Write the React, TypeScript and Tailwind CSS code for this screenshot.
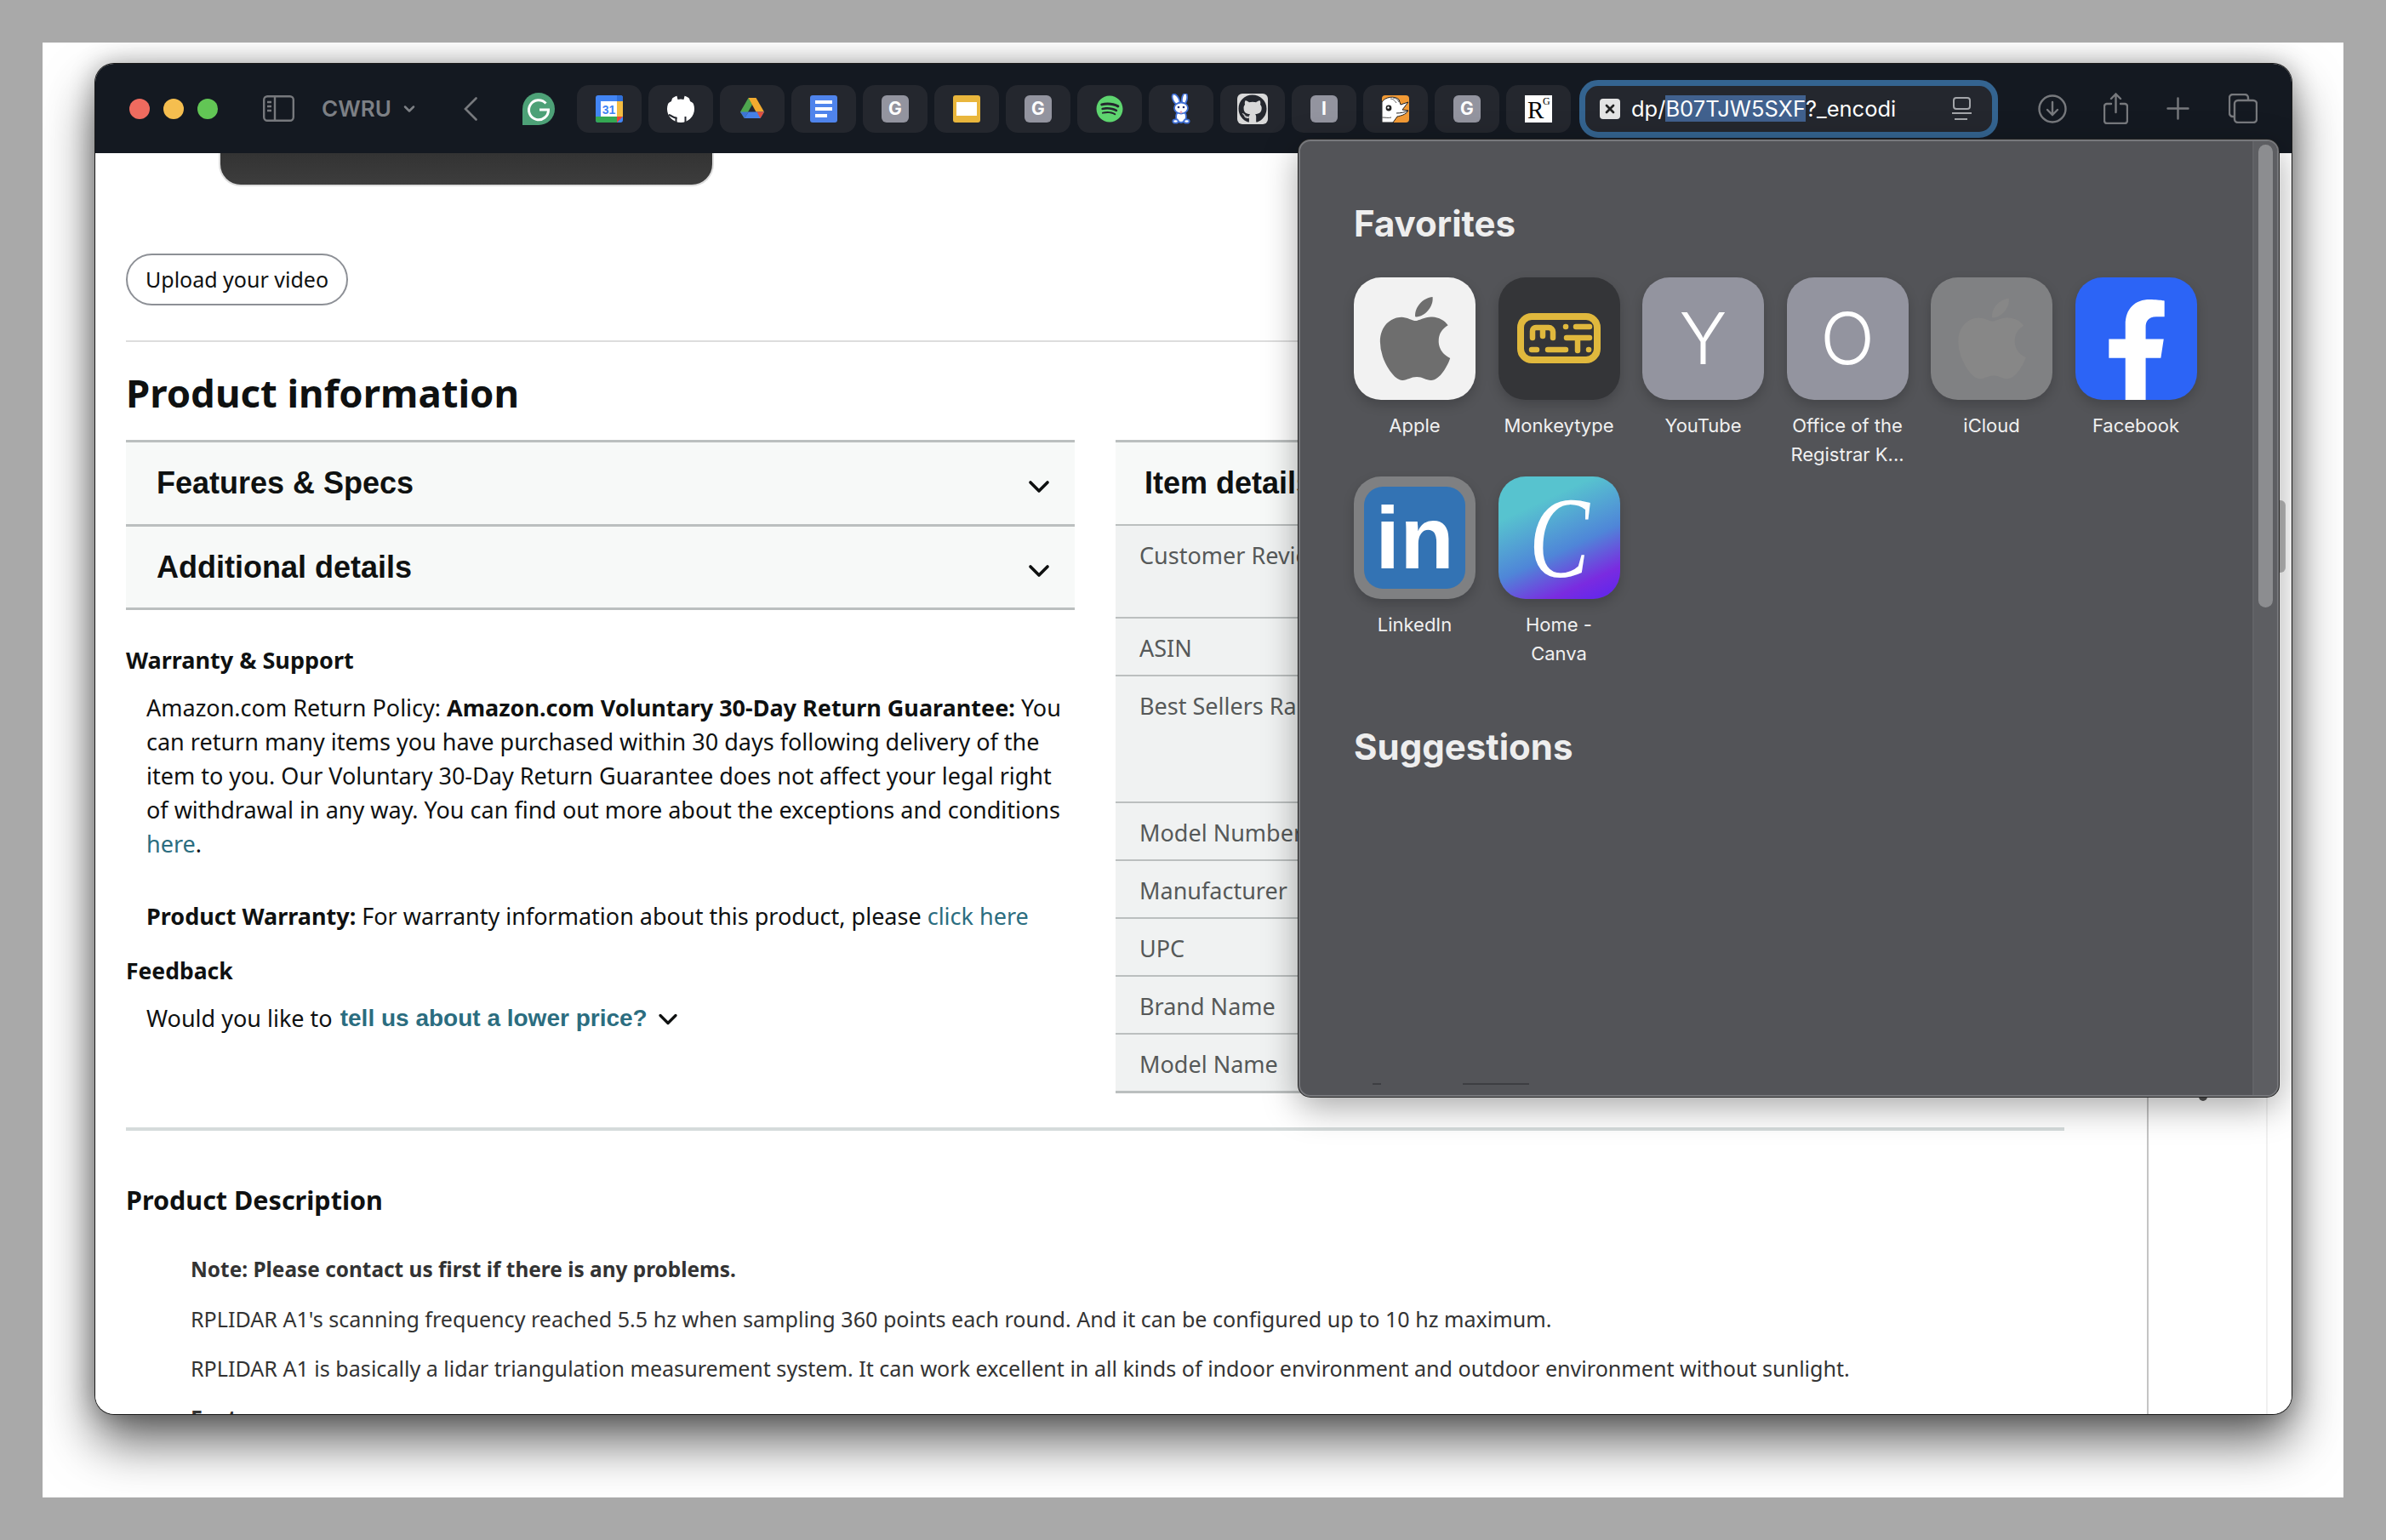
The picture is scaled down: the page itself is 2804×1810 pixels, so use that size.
import React from 'react';
import { ChevronDown, X } from 'lucide-react';
import { FaApple, FaFacebookF, FaGithub, FaSpotify } from 'react-icons/fa';

const Chip = ({ children }: { children: React.ReactNode }) => (
  <div className="flex h-[56px] w-[76px] shrink-0 items-center justify-center rounded-[14px] bg-[#24272e]">
    {children}
  </div>
);

const LetterFavicon = ({ letter }: { letter: string }) => (
  <div className="flex h-[32px] w-[32px] items-center justify-center rounded-[6px] bg-[#93949f] font-[Inter,sans-serif] text-[21px] font-bold text-white">
    {letter}
  </div>
);

const CalendarFavicon = () => (
  <svg viewBox="0 0 32 32" className="h-[32px] w-[32px]">
    <rect width="32" height="32" rx="3" fill="#4285f4" />
    <rect x="24" y="7" width="8" height="18" fill="#f4bc41" />
    <path d="M0 25h25v7H3a3 3 0 0 1-3-3z" fill="#34a853" />
    <path d="M25 25h7l-7 7z" fill="#ea4335" />
    <path d="M25 0h4a3 3 0 0 1 3 3v4h-7z" fill="#2f6fd8" />
    <rect x="6" y="7" width="19" height="18" fill="#fff" />
    <text x="15.5" y="22" textAnchor="middle" fontSize="14" fontWeight="700" fill="#4285f4" className="font-['Liberation_Sans',sans-serif]">31</text>
  </svg>
);

const DriveFavicon = () => (
  <svg viewBox="0 0 32 32" className="h-[32px] w-[32px]">
    <path d="M11.5 3 16 11 6.8 27 2 19.5z" fill="#4ea64f" />
    <path d="M11.5 3H20l-4 8z" fill="#2f8a4a" />
    <path d="M11.5 3H20.5L30 19.5H20.5z" fill="#f2ab2f" />
    <path d="M11.5 19.5H30L25.5 27H6.8z" fill="#4480e8" />
    <path d="M24.5 19.5H30L25.5 27 21.5 19.5z" fill="#e2503d" />
    <path d="M11.5 19.5H2L6.8 27z" fill="#3d74d4" />
  </svg>
);

// solid white octocat, the favicon has no cut-out for the cat
const WhiteOctocat = () => (
  <svg viewBox="0 0 32 32" className="h-[32px] w-[32px]">
    <circle cx="16" cy="16" r="16" fill="#fff" />
    <path d="M11 -1h10l-1.5 6q-3.5-1-7 0z" fill="#24272e" />
    <path d="M0 0h7L5 7 0 10zM32 0h-7l2 7 5 3z" fill="#24272e" />
    <path d="M2 23c3.5.5 4.5 4 9.5 3.5" fill="none" stroke="#24272e" strokeWidth="2.2" />
    <path d="M10.5 33v-7M21.5 33v-8" stroke="#24272e" strokeWidth="2" />
  </svg>
);

const DocsFavicon = () => (
  <div className="flex h-[32px] w-[32px] flex-col items-center justify-center gap-[4px] rounded-[3px] bg-[#4f84ec]">
    <div className="h-[4px] w-[20px] bg-white" />
    <div className="h-[4px] w-[20px] bg-white" />
    <div className="mr-[6px] h-[4px] w-[14px] bg-white" />
  </div>
);

const SlidesFavicon = () => (
  <div className="flex h-[32px] w-[32px] items-center justify-center rounded-[3px] bg-[#e9b63c]">
    <div className="h-[16px] w-[24px] bg-white" />
  </div>
);

const RabbitFavicon = () => (
  <svg viewBox="0 0 32 36" className="h-[36px] w-[32px]">
    <g stroke="#3f6fd6" strokeWidth="1.8" fill="#fff">
      <ellipse cx="10" cy="7" rx="3.5" ry="7" transform="rotate(-28 10 7)" />
      <ellipse cx="20" cy="6" rx="3" ry="6.5" transform="rotate(10 20 6)" />
      <ellipse cx="16" cy="27" rx="6" ry="7" />
      <ellipse cx="16" cy="17" rx="8" ry="6.5" />
      <ellipse cx="9.5" cy="32.5" rx="3.2" ry="2.2" />
      <ellipse cx="22.5" cy="32.5" rx="3.2" ry="2.2" />
    </g>
    <circle cx="13" cy="16" r="1.3" fill="#27357a" />
    <circle cx="19" cy="16" r="1.3" fill="#27357a" />
    <circle cx="16" cy="22" r="1.4" fill="#e2a0b4" />
  </svg>
);

const DuckFavicon = () => (
  <svg viewBox="0 0 32 32" className="h-[32px] w-[32px]">
    <rect width="32" height="32" rx="4" fill="#f29a35" />
    <path d="M0 8C3 2 15 0 20 5l2 6 9-3-7 9 7 1c-3 5-9 6-13 7l-5 7H0z" fill="#fff" stroke="#222" strokeWidth="1" />
    <path d="M13 3c3 0 6 2 7 5M10 4c3 0 5 2 7 5" fill="none" stroke="#666" strokeWidth="1" />
    <circle cx="8" cy="15" r="3.4" fill="#222" />
    <circle cx="7.5" cy="14.5" r="1.2" fill="#fff" />
    <path d="M17 21c5 0 10-1 14-3" fill="none" stroke="#222" strokeWidth="1" />
    <path d="M0 26c4 0 8 1 11 0" fill="none" stroke="#555" strokeWidth="1" />
  </svg>
);

const ResearchGateFavicon = () => (
  <div className="relative h-[32px] w-[32px] bg-white font-['Liberation_Serif',serif] text-black">
    <span className="absolute left-[3px] top-[3px] text-[29px] leading-[29px]">R</span>
    <span className="absolute left-[21px] top-[1px] text-[12px] leading-[12px]">G</span>
  </div>
);

const MonkeytypeIcon = () => (
  <svg viewBox="1 6 143 144" className="h-full w-full">
    <rect x="27" y="52" width="90" height="51" rx="13" fill="none" stroke="#e0b83d" strokeWidth="8" />
    <g fill="none" stroke="#e0b83d" strokeWidth="6.5" strokeLinecap="round">
      <path d="M41 77V69a4 4 0 0 1 4-4h15a5 5 0 0 1 5 5v7M53 66v9" />
      <path d="M80 64h.1M92 64h16M81 77h27M94 77v15M107 91h.1M40 91h6M59 91h21" />
    </g>
  </svg>
);

type Favorite = { label: React.ReactNode; tile: React.ReactNode };

const LetterTile = ({ letter }: { letter: string }) => (
  <div className="flex h-[144px] items-center justify-center rounded-[32px] bg-[#93949f] font-[Inter,sans-serif] text-[84px] font-light leading-none text-white shadow-[0_6px_14px_rgba(0,0,0,0.18)]">
    {letter}
  </div>
);

const favorites: Favorite[] = [
  {
    label: 'Apple',
    tile: (
      <div className="flex h-[144px] items-center justify-center rounded-[32px] bg-[#f2f2f2] shadow-[0_6px_14px_rgba(0,0,0,0.18)]">
        <FaApple className="h-[112px] w-[112px] text-[#6e6e6e]" />
      </div>
    ),
  },
  {
    label: 'Monkeytype',
    tile: (
      <div className="h-[144px] overflow-hidden rounded-[32px] bg-[#343538] shadow-[0_6px_14px_rgba(0,0,0,0.18)]">
        <MonkeytypeIcon />
      </div>
    ),
  },
  { label: 'YouTube', tile: <LetterTile letter="Y" /> },
  { label: <>Office of the<br />Registrar K...</>, tile: <LetterTile letter="O" /> },
  {
    label: 'iCloud',
    tile: (
      <div className="flex h-[144px] items-center justify-center rounded-[32px] bg-[#808183] shadow-[0_6px_14px_rgba(0,0,0,0.18)]">
        <FaApple className="h-[108px] w-[108px] text-[#878787]" />
      </div>
    ),
  },
  {
    label: 'Facebook',
    tile: (
      <div className="relative h-[144px] overflow-hidden rounded-[32px] bg-[#2c64f6] shadow-[0_6px_14px_rgba(0,0,0,0.18)]">
        <FaFacebookF className="absolute left-[11px] top-[26px] h-[122px] w-[122px] text-white" />
      </div>
    ),
  },
  {
    label: 'LinkedIn',
    tile: (
      <div className="h-[144px] rounded-[32px] bg-[#7f8082] p-[12px] shadow-[0_6px_14px_rgba(0,0,0,0.18)]">
        <div className="flex h-full items-center justify-center rounded-[22px] bg-[#3373b4] font-['Liberation_Sans',sans-serif] text-[104px] font-bold leading-none text-white">
          in
        </div>
      </div>
    ),
  },
  {
    label: <>Home -<br />Canva</>,
    tile: (
      <div className="flex h-[144px] items-center justify-center rounded-[32px] bg-[linear-gradient(155deg,#57c3cf_25%,#4f86d8_58%,#7a2be0_82%,#5a25f0_100%)] font-['Liberation_Serif',serif] text-[136px] italic leading-none text-white shadow-[0_6px_14px_rgba(0,0,0,0.18)]">
        <span className="inline-block scale-x-[0.78]">C</span>
      </div>
    ),
  },
];

const specRows = [
  { label: 'Customer Reviews', height: 'h-[109px]' },
  { label: 'ASIN', height: 'h-[68px]' },
  { label: 'Best Sellers Rank', height: 'h-[149px]' },
  { label: 'Model Number', height: 'h-[68px]' },
  { label: 'Manufacturer', height: 'h-[68px]' },
  { label: 'UPC', height: 'h-[68px]' },
  { label: 'Brand Name', height: 'h-[68px]' },
  { label: 'Model Name', height: 'h-[68px]' },
];

const Toolbar = () => (
  <header className="flex h-[105px] shrink-0 items-center bg-[#141921] pl-[40px]">
    <div className="flex gap-[16px]">
      <div className="h-[24px] w-[24px] rounded-full bg-[#ef6b5f]" />
      <div className="h-[24px] w-[24px] rounded-full bg-[#f5be4f]" />
      <div className="h-[24px] w-[24px] rounded-full bg-[#62c655]" />
    </div>
    <svg viewBox="0 0 37 31" className="ml-[53px] h-[31px] w-[37px]" fill="none" stroke="#77797d" strokeWidth="2.4">
      <rect x="1.2" y="1.2" width="34.6" height="28.6" rx="4" />
      <path d="M14 1.5v28M5 8h5M5 13h5M5 18h5" />
    </svg>
    <span className="ml-[32px] w-[80px] font-[Inter,sans-serif] text-[26px] font-semibold text-[#7d8085]">CWRU</span>
    <ChevronDown className="ml-[13px] h-[22px] w-[20px] text-[#7d8085]" strokeWidth={3} />
    <svg viewBox="0 0 16 28" className="ml-[54px] h-[28px] w-[16px]" fill="none" stroke="#77797d" strokeWidth="2.6" strokeLinecap="round">
      <path d="M14.5 1.5 2 14l12.5 12.5" />
    </svg>
    <svg viewBox="0 0 38 38" className="ml-[53px] mr-[26px] h-[38px] w-[38px]">
      <path d="M19 0a19 19 0 0 1 0 38H0V19A19 19 0 0 1 19 0z" fill="#4da177" />
      <path d="M27.5 12.5A11.5 11.5 0 1 0 30.5 20H20" fill="none" stroke="#fff" strokeWidth="3" />
    </svg>
    <div className="flex gap-[8px]">
      <Chip><CalendarFavicon /></Chip>
      <Chip><WhiteOctocat /></Chip>
      <Chip><DriveFavicon /></Chip>
      <Chip><DocsFavicon /></Chip>
      <Chip><LetterFavicon letter="G" /></Chip>
      <Chip><SlidesFavicon /></Chip>
      <Chip><LetterFavicon letter="G" /></Chip>
      <Chip><FaSpotify className="h-[32px] w-[32px] text-[#5ed56f]" /></Chip>
      <Chip><RabbitFavicon /></Chip>
      <Chip>
        <div className="flex h-[36px] w-[36px] items-center justify-center rounded-[6px] bg-[#d9d9d9]">
          <FaGithub className="h-[34px] w-[34px] text-[#24272e]" />
        </div>
      </Chip>
      <Chip><LetterFavicon letter="I" /></Chip>
      <Chip><DuckFavicon /></Chip>
      <Chip><LetterFavicon letter="G" /></Chip>
      <Chip><ResearchGateFavicon /></Chip>
    </div>
    <div className="ml-[10px] flex h-[68px] w-[492px] shrink-0 items-center rounded-[22px] border-[7px] border-[#346490] bg-[#24272e] pl-[17px] pr-[23px]">
      <div className="flex h-[24px] w-[24px] items-center justify-center rounded-[4px] bg-[#e4e4e4]">
        <X className="h-[16px] w-[16px] text-[#222]" strokeWidth={4} />
      </div>
      <span className="ml-[13px] font-[Inter,sans-serif] text-[25.5px] leading-[32px] text-white">
        dp/<span className="bg-[#41618e]">B07TJW5SXF</span>?_encodi
      </span>
      <svg viewBox="0 0 25 27" className="ml-auto h-[27px] w-[25px]" fill="none" stroke="#a3a5a9" strokeWidth="2">
        <rect x="3" y="1" width="19" height="13" rx="3" />
        <path d="M1 19h23M4 26h15" />
      </svg>
    </div>
    <svg viewBox="0 0 34 34" className="ml-[47px] h-[34px] w-[34px]" fill="none" stroke="#77797d" strokeWidth="2.4" strokeLinecap="round">
      <circle cx="17" cy="17" r="15.5" />
      <path d="M17 9v15M11 18l6 6 6-6" />
    </svg>
    <svg viewBox="0 0 29 37" className="ml-[43px] h-[37px] w-[29px]" fill="none" stroke="#77797d" strokeWidth="2.4" strokeLinecap="round">
      <path d="M9 13H4a3 3 0 0 0-3 3v17a3 3 0 0 0 3 3h21a3 3 0 0 0 3-3V16a3 3 0 0 0-3-3h-5M14.5 23V2M9 7l5.5-5.5L20 7" />
    </svg>
    <svg viewBox="0 0 27 27" className="ml-[45px] h-[27px] w-[27px]" fill="none" stroke="#77797d" strokeWidth="2.4" strokeLinecap="round">
      <path d="M13.5 1.5v24M1.5 13.5h24" />
    </svg>
    <svg viewBox="0 0 34 35" className="ml-[46px] h-[35px] w-[34px]" fill="none" stroke="#77797d" strokeWidth="2.4">
      <path d="M6 27H5a4 4 0 0 1-4-4V5a4 4 0 0 1 4-4h14a4 4 0 0 1 4 4v3" />
      <rect x="7" y="8" width="26" height="26" rx="4" />
    </svg>
  </header>
);

const ProductPage = () => (
  <main className="relative flex-1 overflow-hidden bg-white pl-[36px] font-['Noto_Sans',sans-serif] text-[27px] text-[#0f1111]">
    <div className="ml-[109px] h-[39px] w-[582px] rounded-b-[26px] border-x-2 border-b-2 border-[#dddddd] bg-[linear-gradient(to_bottom,#333333,#3d3d3d)]" />
    <button className="mt-[79px] flex h-[61px] w-[261px] items-center justify-center rounded-full border-2 border-[#8d9096] bg-white text-[25px]">
      Upload your video
    </button>
    <div className="mt-[41px] h-[2px] w-[2278px] bg-[#dddddd]" />
    <h2 className="flex h-[115px] items-center pt-[3px] text-[45.5px] font-bold">Product information</h2>
    <div className="flex w-[2278px] gap-[48px]">
      <div className="w-[1115px]">
        <div className="border-y-[3px] border-[#bbbfbf] bg-[#f7f9f8]">
          <div className="flex h-[96px] items-center justify-between pl-[36px] pr-[22px] font-['Liberation_Sans',sans-serif] text-[36px] font-bold">
            Features & Specs
            <ChevronDown className="mt-[8px] h-[40px] w-[40px]" strokeWidth={2.2} />
          </div>
          <div className="flex h-[98px] items-center justify-between border-t-[3px] border-[#bbbfbf] pl-[36px] pr-[22px] font-['Liberation_Sans',sans-serif] text-[36px] font-bold">
            Additional details
            <ChevronDown className="mt-[8px] h-[40px] w-[40px]" strokeWidth={2.2} />
          </div>
        </div>
        <h3 className="mt-[39px] text-[27px] font-bold leading-[40px]">Warranty & Support</h3>
        <p className="ml-[24px] mt-[16px] leading-[40px]">
          Amazon.com Return Policy: <b>Amazon.com Voluntary 30-Day Return Guarantee:</b> You<br />
          can return many items you have purchased within 30 days following delivery of the<br />
          item to you. Our Voluntary 30-Day Return Guarantee does not affect your legal right<br />
          of withdrawal in any way. You can find out more about the exceptions and conditions<br />
          <span className="text-[#2b6d80]">here</span>.
        </p>
        <p className="ml-[24px] mt-[45px] leading-[40px]">
          <b>Product Warranty:</b> For warranty information about this product, please <span className="text-[#2b6d80]">click here</span>
        </p>
        <h3 className="mt-[24px] text-[26.5px] font-bold leading-[40px]">Feedback</h3>
        <p className="ml-[24px] mt-[16px] flex items-center leading-[40px]">
          Would you like to&nbsp;
          <span className="ml-[2px] font-['Liberation_Sans',sans-serif] text-[28px] font-bold text-[#2b6d80]">tell us about a lower price?</span>
          <ChevronDown className="ml-[6px] mt-[2px] h-[36px] w-[36px] text-[#0f1111]" strokeWidth={2.2} />
        </p>
      </div>
      <div className="w-[1115px] border-y-[3px] border-[#bbbfbf]">
        <div className="flex h-[96px] items-center bg-[#f7f9f8] pl-[34px] font-['Liberation_Sans',sans-serif] text-[36px] font-bold">
          Item details
        </div>
        {specRows.map((row) => (
          <div key={row.label} className={`${row.height} border-t-[2px] border-[#bbbfbf] bg-[#f0f2f2] pl-[28px] pt-[15px] leading-[40px] text-[#565959]`}>
            {row.label}
          </div>
        ))}
      </div>
    </div>
    <div className="mt-[40px] h-[4px] w-[2278px] bg-[#d5dbdb]" />
    <h3 className="mt-[61px] text-[30.5px] font-bold leading-[40px]">Product Description</h3>
    <div className="ml-[76px] mt-[42px] flex flex-col gap-[18px] text-[25.1px] leading-[40px] text-[#333333]">
      <p className="text-[24.4px] font-bold">Note: Please contact us first if there is any problems.</p>
      <p>RPLIDAR A1's scanning frequency reached 5.5 hz when sampling 360 points each round. And it can be configured up to 10 hz maximum.</p>
      <p>RPLIDAR A1 is basically a lidar triangulation measurement system. It can work excellent in all kinds of indoor environment and outdoor environment without sunlight.</p>
      <p className="font-bold">Features:</p>
    </div>
    <div className="absolute bottom-0 left-[2411px] top-0 w-[2px] bg-[#c4c4c4]" />
    <div className="absolute bottom-0 left-[2551px] top-0 w-[2px] bg-[#f0f0f0]" />
    <div className="absolute left-[2472px] top-[1104px] h-[10px] w-[10px] rounded-full bg-[#555555]" />
    <div className="absolute left-[2567px] top-[408px] h-[85px] w-[7px] rounded-r-[6px] bg-[#b9b9b9]" />
  </main>
);

const FavoritesPopover = () => (
  <aside className="absolute left-[1414px] top-[89px] flex h-[1125px] w-[1152px] overflow-hidden rounded-[14px] border-2 border-[#77787c] bg-[#535458] pl-[63px] pt-[69px] font-[Inter,sans-serif] shadow-[0_0_0_1px_#222,0_12px_40px_rgba(0,0,0,0.35)]">
    <div className="w-[1018px] shrink-0">
      <h2 className="text-[42px] font-bold leading-[56px] text-[#eeeeee]">Favorites</h2>
      <div className="mt-[35px] grid grid-cols-[repeat(6,143px)] gap-x-[26.5px]">
        {favorites.map((item, index) => (
          <div key={index} className="h-[234px]">
            {item.tile}
            <div className="mt-[13px] text-center text-[22px] leading-[34px] text-[#f0f0f0]">{item.label}</div>
          </div>
        ))}
      </div>
      <h2 className="mt-[56px] text-[42px] font-bold leading-[56px] text-[#eeeeee]">Suggestions</h2>
    </div>
    <div className="absolute bottom-0 right-0 top-0 w-[29px] border-l-2 border-[#626367] bg-[#5d5e62] pl-[5px] pt-[4px]">
      <div className="h-[544px] w-[17px] rounded-full bg-[#8c8d90]" />
    </div>
    <div className="absolute bottom-[12px] left-[191px] h-[2px] w-[78px] bg-[#3d3e42]" />
    <div className="absolute bottom-[12px] left-[85px] h-[2px] w-[10px] bg-[#3d3e42]" />
  </aside>
);

export default function App() {
  return (
    <div className="h-[1810px] w-[2804px] overflow-hidden bg-[#a9a9a9] p-[50px]">
      <div className="h-[1710px] overflow-hidden bg-white pl-[62px] pr-[61px] pt-[25px]">
        <div className="relative flex h-[1587px] flex-col overflow-hidden rounded-[22px] shadow-[0_0_0_1px_#1a1a1a,0_32px_60px_rgba(0,0,0,0.62),0_0_30px_rgba(0,0,0,0.3)]">
          <Toolbar />
          <ProductPage />
          <FavoritesPopover />
        </div>
      </div>
    </div>
  );
}
